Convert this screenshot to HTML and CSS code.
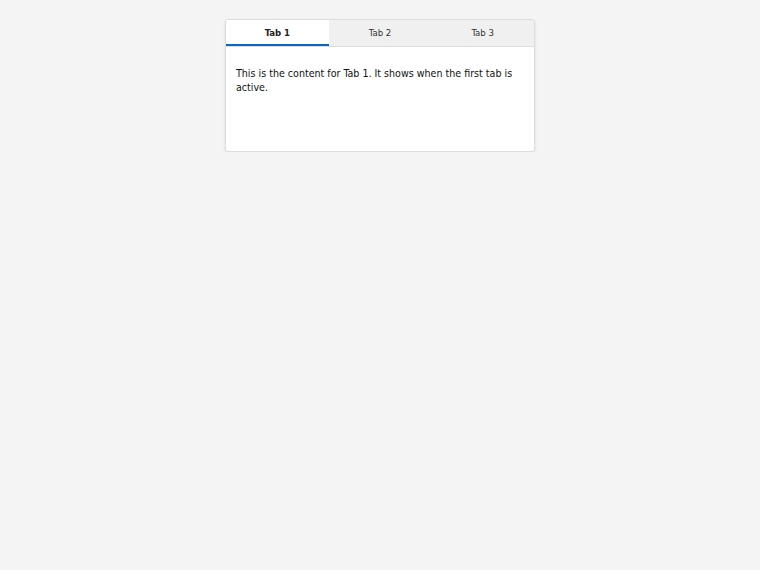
FILE: index.html
```html
<!DOCTYPE html>
<html lang="en">
<head>
  <meta charset="UTF-8" />
  <title>Tabs</title>
  <link rel="stylesheet" href="styles.css">
</head>
<body>
  <div class="tabs">
    <div class="tab-bar">
      <button class="tab active">Tab 1</button>
      <button class="tab">Tab 2</button>
      <button class="tab">Tab 3</button>
    </div>
    <div class="tab-content">
      <p>This is the content for Tab 1. It shows when the first tab is active.</p>
    </div>
  </div>
</body>
</html>
```

FILE: styles.css
```css
* {
  margin: 0;
  padding: 0;
  box-sizing: border-box;
  font-family: 'DejaVu Sans Condensed', 'DejaVu Sans', sans-serif;
  font-stretch: condensed;
}

body {
  background: #f4f4f4;
  padding-top: 19px;
}

.tabs {
  width: 310px;
  margin: 0 auto;
  background: #fff;
  border: 1px solid #ddd;
  border-radius: 3px;
  box-shadow: 0 1px 3px rgba(0, 0, 0, 0.1);
  overflow: hidden;
}

.tab-bar {
  display: flex;
  background: #f0f0f0;
  border-bottom: 1px solid #ddd;
}

.tab {
  flex: 1;
  height: 26px;
  padding-top: 1px;
  border: none;
  border-bottom: 2px solid transparent;
  background: none;
  font-size: 9.5px;
  color: #333;
  cursor: pointer;
}

.tab.active {
  background: #fff;
  border-bottom-color: #0a66c2;
  font-weight: bold;
  color: #222;
}

.tab-content {
  padding: 19px 10px;
  height: 104px;
}

.tab-content p {
  font-size: 10.6px;
  line-height: 14px;
  color: #111;
}
```
